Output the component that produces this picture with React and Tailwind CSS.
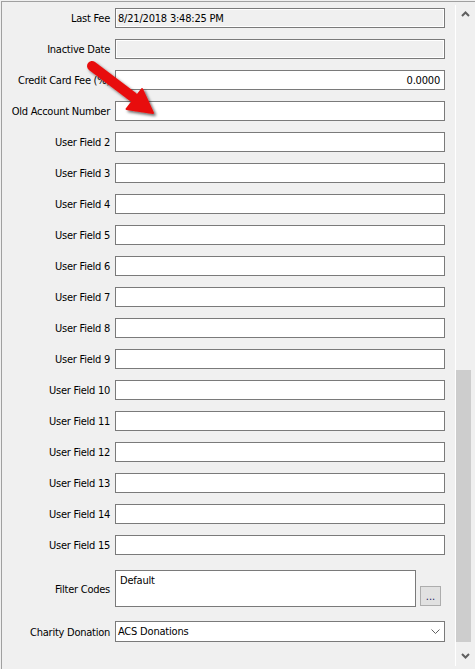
import React from "react";

const font = { fontFamily: '"DejaVu Sans Condensed", "Liberation Sans", sans-serif' };

function Row({ label, children }) {
  return (
    <div className="flex items-center h-[20px]">
      <div className="w-[108px] text-right text-[11px] tracking-[-0.25px] text-black whitespace-nowrap leading-none pt-px">{label}</div>
      <div className="ml-[5px]">{children}</div>
    </div>
  );
}

function Box({ children, disabled, right }) {
  return (
    <div
      className={
        "w-[330px] h-[20px] border border-[#7a7a7a] flex items-center px-[2px] text-[11px] tracking-[-0.2px] text-black leading-none " +
        (disabled ? "bg-[#f0f0f0] shadow-[inset_0_0_0_1px_#ffffff] " : "bg-white ") +
        (right ? "justify-end pr-[4px]" : "")
      }
    >
      {children}
    </div>
  );
}

export default function App() {
  const userFields = [2, 3, 4, 5, 6, 7, 8, 9, 10, 11, 12, 13, 14, 15];
  return (
    <div className="w-[475px] h-[669px] bg-[#f0f0f0] relative overflow-hidden pl-px pt-px" style={font}>
      <div className="h-full border-l border-t border-[#a0a0a0] flex">
        <div className="w-[453px] pt-[6px] flex flex-col gap-[11px]">
          <Row label="Last Fee">
            <Box disabled>8/21/2018 3:48:25 PM</Box>
          </Row>
          <Row label="Inactive Date">
            <Box disabled />
          </Row>
          <Row label="Credit Card Fee (%)">
            <Box right>0.0000</Box>
          </Row>
          <Row label="Old Account Number">
            <Box />
          </Row>
          {userFields.map((n) => (
            <Row key={n} label={`User Field ${n}`}>
              <Box />
            </Row>
          ))}
          <div className="flex items-center mt-[4px] h-[37px]">
            <div className="w-[108px] text-right text-[11px] tracking-[-0.25px] text-black leading-none pt-[2px]">Filter Codes</div>
            <div className="ml-[5px] flex items-end h-full">
              <div className="w-[301px] h-[37px] bg-white border border-[#7a7a7a] px-[4px] pt-[3px] text-[11px] tracking-[-0.2px] text-black leading-[14px]">
                Default
              </div>
              <div className="ml-[4px] mb-px w-[21px] h-[20px] bg-[#e1e1e1] border border-[#adadad] flex items-end justify-center pb-[3px] text-[11px] leading-none text-[#202060]">
                ...
              </div>
            </div>
          </div>
          <div className="flex items-center h-[21px] mt-[3px]">
            <div className="w-[108px] text-right text-[11px] tracking-[-0.25px] text-black leading-none pt-px">Charity Donation</div>
            <div className="ml-[5px] w-[330px] h-[21px] bg-white border border-[#7a7a7a] flex items-center justify-between pl-[2px] pr-[4px] text-[11px] tracking-[-0.2px] text-black leading-none">
              <span>ACS Donations</span>
              <svg width="9" height="6" viewBox="0 0 9 6">
                <path d="M0.5 0.5 L4.5 4.5 L8.5 0.5" fill="none" stroke="#606060" strokeWidth="1" />
              </svg>
            </div>
          </div>
        </div>
        <div className="w-[20px] flex flex-col pt-[3px] pb-[3px]">
          <div className="flex-1 border-l border-white flex flex-col">
            <div className="h-[17px] flex items-center justify-center">
              <svg width="9" height="6" viewBox="0 0 9 6">
                <path d="M1 5 L4.5 1.5 L8 5" fill="none" stroke="#606060" strokeWidth="2" />
              </svg>
            </div>
            <div className="flex-1 flex flex-col">
              <div className="h-[348px]" />
              <div className="w-[15px] h-[272px] bg-[#cdcdcd]" />
            </div>
            <div className="h-[20px] flex items-center justify-center">
              <svg width="9" height="6" viewBox="0 0 9 6">
                <path d="M1 1 L4.5 4.5 L8 1" fill="none" stroke="#606060" strokeWidth="2" />
              </svg>
            </div>
          </div>
        </div>
      </div>
      <svg className="absolute left-0 top-0 pointer-events-none" width="475" height="669" viewBox="0 0 475 669">
        <defs>
          <filter id="sh" x="-20%" y="-20%" width="160%" height="160%">
            <feDropShadow dx="2" dy="2" stdDeviation="1.5" floodColor="#000" floodOpacity="0.6" />
          </filter>
        </defs>
        <g filter="url(#sh)">
          <line x1="92" y1="66" x2="133" y2="97" stroke="#e8100c" strokeWidth="10" strokeLinecap="round" />
          <polygon points="153,113 126.5,109 142,89" fill="#e8100c" stroke="#e8100c" strokeWidth="2" strokeLinejoin="round" />
        </g>
      </svg>
    </div>
  );
}
